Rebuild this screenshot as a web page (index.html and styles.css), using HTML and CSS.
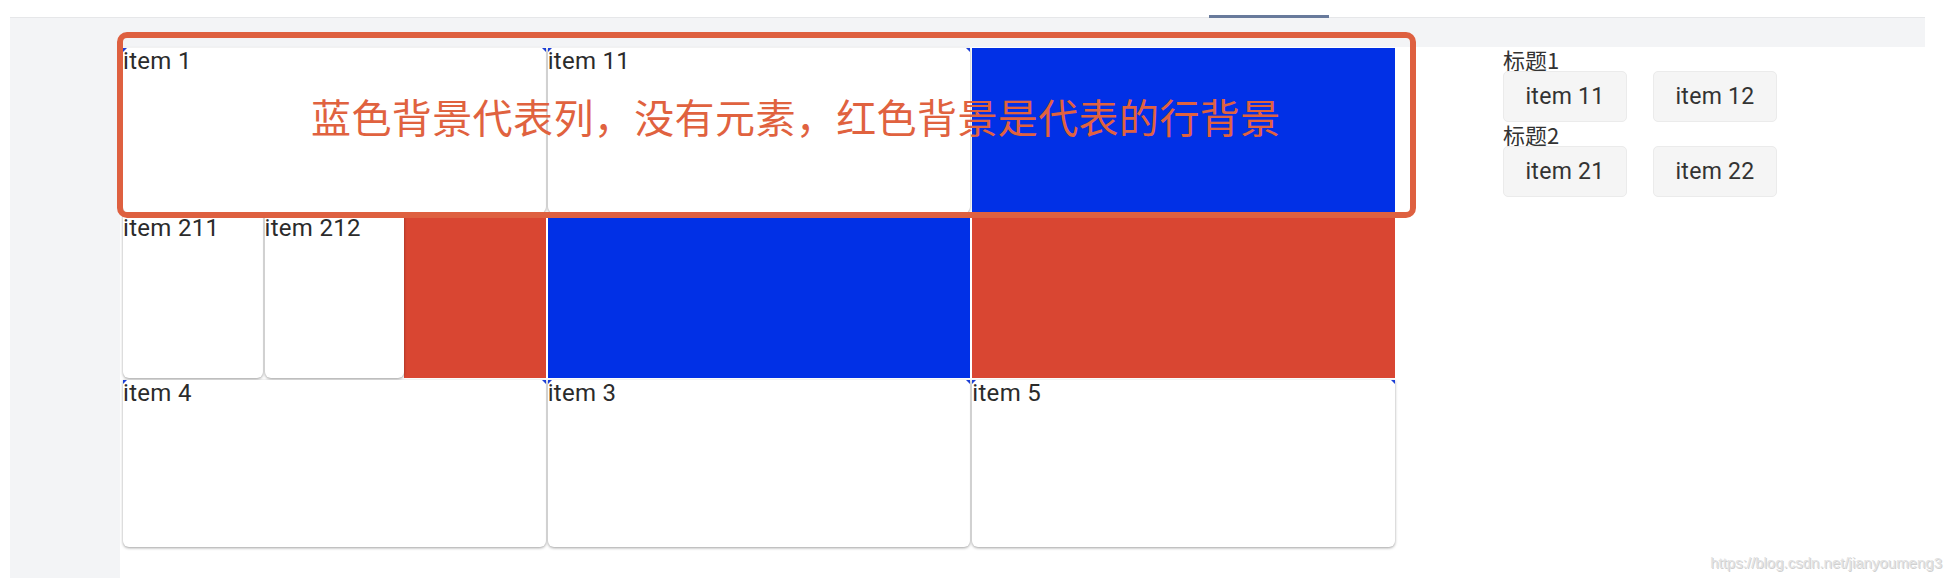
FILE: index.html
```html
<!DOCTYPE html>
<html lang="zh-CN">
<head>
    <meta charset="UTF-8">
    <meta name="viewport" content="width=device-width, initial-scale=1.0">
    <title>Grid 布局示例</title>
    <link rel="stylesheet" href="styles.css">
</head>
<body>
    <header class="topbar">
        <span class="tab-active"></span>
    </header>

    <div class="layout">
        <main class="content">
            <div class="board">
                <!-- 说明框 -->
                <div class="note">蓝色背景代表列，没有元素，红色背景是代表的行背景</div>

                <div class="grid">
                    <!-- 第一行 -->
                    <div class="card marked">item 1</div>
                    <div class="card marked">item 11</div>
                    <div class="col-bg"></div>

                    <!-- 第二行 -->
                    <div class="sub-grid">
                        <div class="card">item 211</div>
                        <div class="card">item 212</div>
                        <div class="row-bg"></div>
                    </div>
                    <div class="col-bg"></div>
                    <div class="row-bg"></div>

                    <!-- 第三行 -->
                    <div class="card marked">item 4</div>
                    <div class="card marked">item 3</div>
                    <div class="card marked">item 5</div>
                </div>
            </div>

            <div class="groups">
                <div class="group-title">标题1</div>
                <div class="group-items">
                    <div class="chip">item 11</div>
                    <div class="chip">item 12</div>
                </div>
                <div class="group-title">标题2</div>
                <div class="group-items">
                    <div class="chip">item 21</div>
                    <div class="chip">item 22</div>
                </div>
            </div>
        </main>
    </div>

    <div class="watermark">https://blog.csdn.net/jianyoumeng3</div>
</body>
</html>
```

FILE: styles.css
```css
/* Général */
* {
    margin: 0;
    padding: 0;
    box-sizing: border-box;
}

body {
    width: 1948px;
    height: 578px;
    overflow: hidden;
    position: relative;
    font-family: Roboto, 'Noto Sans CJK SC', sans-serif;
    background-color: #fff;
    color: #2b2b2b;
}

/* Barre du haut */
.topbar {
    height: 17px;
    display: flex;
    align-items: flex-end;
    padding-left: 1209px;
}

.tab-active {
    width: 120px;
    height: 3px;
    margin-bottom: -1px;
    background-color: #687a9b;
    position: relative;
    z-index: 1;
}

/* Cadre gris : bandeau + barre latérale */
.layout {
    width: 1915px;
    height: 561px;
    margin-left: 10px;
    padding: 29px 0 0 110px;
    background-color: #f3f4f6;
    border-top: 1px solid #e6e7e9;
}

.content {
    height: 100%;
    background-color: #fff;
    padding: 1px 0 0 3px;
    display: flex;
    align-items: flex-start;
}

/* Grille */
.board {
    position: relative;
    width: 1272px;
}

.grid {
    display: grid;
    grid-template-columns: repeat(3, 1fr);
    grid-template-rows: 165px 163px 167px;
    gap: 2px;
}

.card {
    position: relative;
    background-color: #fff;
    border-radius: 0 0 6px 6px;
    box-shadow: 0 1px 3px rgba(0, 0, 0, 0.38);
    font-size: 24px;
    letter-spacing: 0.3px;
    line-height: 1.15;
    color: #2b2b2b;
}

.card.marked::before,
.card.marked::after {
    content: "";
    position: absolute;
    top: 0;
    border-top: 4px solid #1d3fd6;
}

.card.marked::before {
    left: 0;
    border-right: 4px solid transparent;
}

.card.marked::after {
    right: 0;
    border-left: 4px solid transparent;
}

.col-bg {
    background-color: #0130e6;
}

.row-bg {
    background-color: #d94632;
}

.sub-grid {
    display: grid;
    grid-template-columns: repeat(3, 1fr);
    gap: 2px;
    background-color: #fff;
}

.sub-grid .row-bg {
    margin-left: -2px;
}

/* Cadre d'annotation */
.note {
    position: absolute;
    left: -6px;
    top: -16px;
    width: 1299px;
    height: 186px;
    padding: 58px 0 0 188px;
    border: 6px solid #de6040;
    border-radius: 10px;
    font-family: 'Noto Sans CJK SC', sans-serif;
    font-size: 40px;
    letter-spacing: 0.4px;
    line-height: 1;
    color: #e0623f;
    z-index: 2;
    pointer-events: none;
}

/* Groupes à droite */
.groups {
    margin-left: 108px;
    margin-top: -1px;
    display: flex;
    flex-direction: column;
}

.group-title {
    font-family: 'Noto Sans CJK SC', sans-serif;
    font-size: 22px;
    line-height: 24px;
    color: #333;
}

.group-items {
    display: flex;
    gap: 26px;
}

.chip {
    width: 124px;
    height: 51px;
    display: flex;
    align-items: center;
    justify-content: center;
    background-color: #f5f5f5;
    border: 1px solid #ebebeb;
    border-radius: 5px;
    font-size: 23px;
    letter-spacing: 0.3px;
    color: #333;
}

/* Filigrane */
.watermark {
    position: absolute;
    right: 6px;
    bottom: 7px;
    font-family: 'Liberation Sans', sans-serif;
    font-size: 15px;
    color: #e2e2e2;
    text-shadow: 1px 1px 0 #d0d0d0;
}
```
